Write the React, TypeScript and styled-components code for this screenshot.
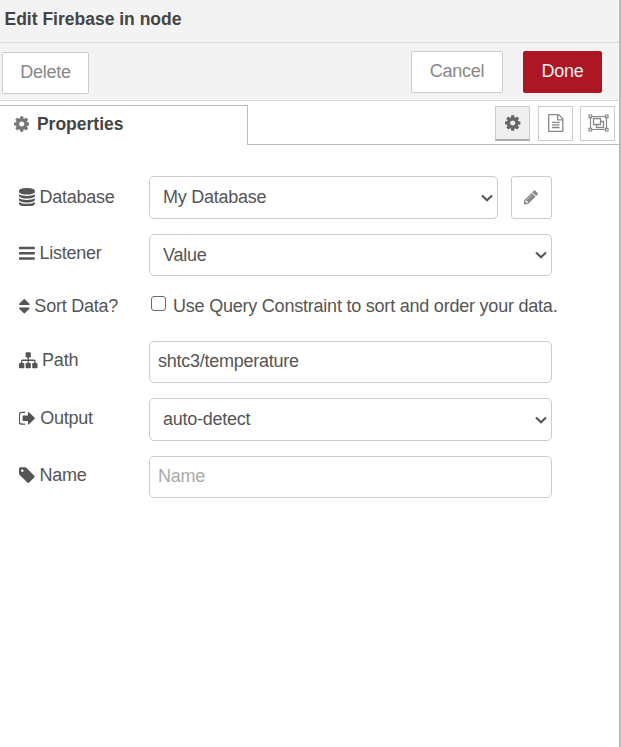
import React from "react";
import styled, { createGlobalStyle, css } from "styled-components";

const GlobalStyle = createGlobalStyle`
  * { box-sizing: border-box; }
  body { margin: 0; background: #fff; }
  body, input, select, button {
    font-family: "Liberation Sans", Arial, Helvetica, sans-serif;
    font-size: 18px;
    color: #555;
  }
`;

const Tray = styled.div`
  width: 621px;
  height: 747px;
  border-right: 2px solid #bbb;
  overflow: hidden;
`;

const Header = styled.header`
  height: 43px;
  padding: 0 4.5px;
  border-bottom: 1px solid #dadada;
  background: #f3f3f3;
  color: #444;
  font-size: 17.5px;
  font-weight: bold;
  line-height: 38px;
`;

const Toolbar = styled.div`
  display: flex;
  align-items: flex-start;
  height: 58px;
  padding: 8px 17px 0 2px;
  border-bottom: 1px solid #dadada;
  background: #f3f3f3;
`;

const ToolButton = styled.button<{ $width: number; $primary?: boolean; $low?: boolean }>`
  width: ${(p) => p.$width}px;
  height: 42px;
  margin-top: ${(p) => (p.$low ? 1 : 0)}px;
  padding: 0 0 2px;
  border: 1px solid ${(p) => (p.$primary ? "#ad1625" : "#ccc")};
  border-radius: 2px;
  background: ${(p) => (p.$primary ? "#ad1625" : "#fff")};
  color: ${(p) => (p.$primary ? "#eee" : "#888")};
  letter-spacing: -0.25px;
`;

const Actions = styled.div`
  display: flex;
  gap: 20px;
  margin-left: auto;
`;

const TabBar = styled.nav`
  display: flex;
  justify-content: space-between;
  height: 44px;
  padding-top: 4px;
  background: linear-gradient(#bbb, #bbb) bottom / 100% 1px no-repeat;
`;

const Tab = styled.div`
  display: flex;
  align-items: center;
  width: 248px;
  height: 40px;
  padding: 0 0 3px 14px;
  border: 1px solid #bbb;
  border-width: 1px 1px 0 0;
  background: #fff;
  color: #444;
  font-size: 17.5px;
  font-weight: bold;
  gap: 7.5px;
  svg { color: #777; }
`;

const TabTools = styled.div`
  display: flex;
  padding: 1px 4px 0 0;
`;

const IconTab = styled.button<{ $active?: boolean; $gap?: number }>`
  display: flex;
  align-items: center;
  justify-content: center;
  width: 35px;
  height: 35px;
  margin-left: ${(p) => p.$gap ?? 0}px;
  padding: 0 0 1px 1px;
  border: 1px solid #ccc;
  background: #fff;
  color: #888;
  ${(p) =>
    p.$active &&
    css`
      border-bottom: 2px solid #aaa;
      background: #efefef;
      color: #666;
    `}
`;

const Form = styled.form`
  display: grid;
  grid-template-columns: 130px 1fr;
  grid-template-rows: 58px 57px 50px 57px 58px 57px;
  padding: 31px 0 0 19px;
`;

const Label = styled.label<{ $top: number; $gap?: number }>`
  display: flex;
  align-items: center;
  align-self: start;
  gap: ${(p) => p.$gap ?? 4.6}px;
  height: 22px;
  margin-top: ${(p) => p.$top}px;
  letter-spacing: -0.24px;
  white-space: nowrap;
`;

const FieldCell = styled.div`
  display: flex;
  align-items: flex-start;
  gap: 13px;
`;

const fieldBox = css<{ $width?: number; $height?: number }>`
  display: block;
  width: ${(p) => p.$width ?? 403}px;
  height: ${(p) => p.$height ?? 42}px;
  margin: 0;
  border: 1px solid #ccc;
  border-radius: 5px;
  background: #fff;
  color: #555;
  outline: none;
  letter-spacing: -0.25px;
`;

const TextInput = styled.input<{ $width?: number; $height?: number }>`
  ${fieldBox}
  padding: 0 8px 1px;
  &::placeholder { color: #aaa; }
`;

const SelectWrap = styled.div`
  display: grid;
  > * { grid-area: 1 / 1; }
  > svg {
    align-self: center;
    justify-self: end;
    margin-right: 5px;
    pointer-events: none;
  }
`;

const SelectBox = styled.select<{ $width?: number; $height?: number }>`
  ${fieldBox}
  appearance: none;
  padding: 0 24px 1px 13px;
`;

const EditButton = styled.button`
  display: flex;
  align-items: center;
  justify-content: center;
  width: 41px;
  height: 43px;
  padding: 0 1px 1px 0;
  border: 1px solid #ccc;
  border-radius: 3px;
  background: #fff;
  color: #888;
`;

const CheckLabel = styled.label`
  display: flex;
  align-items: flex-start;
  gap: 7px;
  padding-left: 2px;
  line-height: 22px;
  letter-spacing: -0.22px;
  white-space: nowrap;
  margin-top: 4px;
`;

const CheckBox = styled.input`
  appearance: none;
  width: 15px;
  height: 15px;
  margin: 1px 0 0;
  border: 1px solid #6b6b6b;
  border-radius: 3px;
  background: #fff;
`;

const ICONS = {
  cog: { x: 128, w: 1536, d: "M1152 896q0-106-75-181t-181-75-181 75-75 181 75 181 181 75 181-75 75-181zm512-109v222q0 12-8 23t-20 13l-185 28q-19 54-39 91 35 50 107 138 10 12 10 25t-9 23q-27 37-99 108t-94 71q-12 0-26-9l-138-108q-44 23-91 38-16 136-29 186-7 28-36 28h-222q-14 0-24.5-8.5t-11.5-21.5l-28-184q-49-16-90-37l-141 107q-10 9-25 9-14 0-25-11-126-114-165-168-7-10-7-23 0-12 8-23 15-21 51-66.5t54-70.5q-27-50-41-99l-183-27q-13-2-21-12.5t-8-23.5v-222q0-12 8-23t19-13l186-28q14-46 39-92-40-57-107-138-10-12-10-24 0-10 9-23 26-36 98.5-107.5t94.5-71.5q13 0 26 10l138 107q44-23 91-38 16-136 29-186 7-28 36-28h222q14 0 24.5 8.5t11.5 21.5l28 184q49 16 90 37l142-107q9-9 24-9 13 0 25 10 129 119 165 170 7 8 7 22 0 12-8 23-15 21-51 66.5t-54 70.5q26 50 41 98l183 28q13 2 21 12.5t8 23.5z" },
  database: { x: 128, w: 1536, d: "M896 768q237 0 443-43t325-127v170q0 69-103 128t-280 93.5-385 34.5-385-34.5-280-93.5-103-128v-170q119 84 325 127t443 43zm0 768q237 0 443-43t325-127v170q0 69-103 128t-280 93.5-385 34.5-385-34.5-280-93.5-103-128v-170q119 84 325 127t443 43zm0-384q237 0 443-43t325-127v170q0 69-103 128t-280 93.5-385 34.5-385-34.5-280-93.5-103-128v-170q119 84 325 127t443 43zm0-1152q208 0 385 34.5t280 93.5 103 128v128q0 69-103 128t-280 93.5-385 34.5-385-34.5-280-93.5-103-128v-128q0-69 103-128t280-93.5 385-34.5z" },
  bars: { x: 128, w: 1536, d: "M192 256h1408q64 0 64 64v128q0 64-64 64h-1408q-64 0-64-64v-128q0-64 64-64zm0 512h1408q64 0 64 64v128q0 64-64 64h-1408q-64 0-64-64v-128q0-64 64-64zm0 512h1408q64 0 64 64v128q0 64-64 64h-1408q-64 0-64-64v-128q0-64 64-64z" },
  sort: { x: 384, w: 1024, d: "M1408 1088q0 26-19 45l-448 448q-19 19-45 19t-45-19l-448-448q-19-19-19-45t19-45 45-19h896q26 0 45 19t19 45zm0-384q0 26-19 45t-45 19h-896q-26 0-45-19t-19-45 19-45l448-448q19-19 45-19t45 19l448 448q19 19 19 45z" },
  sitemap: { x: 0, w: 1792, d: "M1792 1248v320q0 40-28 68t-68 28h-320q-40 0-68-28t-28-68v-320q0-40 28-68t68-28h96v-192h-512v192h96q40 0 68 28t28 68v320q0 40-28 68t-68 28h-320q-40 0-68-28t-28-68v-320q0-40 28-68t68-28h96v-192h-512v192h96q40 0 68 28t28 68v320q0 40-28 68t-68 28h-320q-40 0-68-28t-28-68v-320q0-40 28-68t68-28h96v-192q0-52 38-90t90-38h512v-192h-96q-40 0-68-28t-28-68v-320q0-40 28-68t68-28h320q40 0 68 28t28 68v320q0 40-28 68t-68 28h-96v192h512q52 0 90 38t38 90v192h96q40 0 68 28t28 68z" },
  signOut: { x: 96, w: 1568, d: "M704 1440q0 4 1 20t.5 26.5-3 23.5-10 19.5-20.5 6.5h-320q-119 0-203.5-84.5t-84.5-203.5v-704q0-119 84.5-203.5t203.5-84.5h320q13 0 22.5 9.5t9.5 22.5q0 4 1 20t.5 26.5-3 23.5-10 19.5-20.5 6.5h-320q-66 0-113 47t-47 113v704q0 66 47 113t113 47h312l11.5 1 11.5 3 8 5.5 7 9 2 13.5zm928-544q0 26-19 45l-544 544q-19 19-45 19t-45-19-19-45v-288h-448q-26 0-45-19t-19-45v-384q0-26 19-45t45-19h448v-288q0-26 19-45t45-19 45 19l544 544q19 19 19 45z" },
  tag: { x: 128, w: 1536, d: "M576 448q0-53-37.5-90.5t-90.5-37.5-90.5 37.5-37.5 90.5 37.5 90.5 90.5 37.5 90.5-37.5 37.5-90.5zm1067 576q0 53-37 90l-491 492q-39 37-91 37-53 0-90-37l-715-716q-38-37-64.5-101t-26.5-117v-416q0-52 38-90t90-38h416q53 0 117 26.5t102 64.5l715 714q37 39 37 91z" },
  pencil: { x: 128, w: 1536, d: "M491 1536l91-91-235-235-91 91v107h128v128h107zm523-928q0-22-22-22-10 0-17 7l-542 542q-7 7-7 17 0 22 22 22 10 0 17-7l542-542q7-7 7-17zm-54-192l416 416-832 832h-416v-416zm683 96q0 53-37 90l-166 166-416-416 166-165q36-38 90-38 53 0 91 38l235 234q37 39 37 91z" },
  fileText: { x: 128, w: 1536, d: "M1596 380q28 28 48 76t20 88v1152q0 40-28 68t-68 28h-1344q-40 0-68-28t-28-68v-1600q0-40 28-68t68-28h896q40 0 88 20t76 48zm-444-244v376h376q-10-29-22-41l-313-313q-12-12-41-22zm384 1528v-1024h-416q-40 0-68-28t-28-68v-416h-768v1536h1280zm-1024-864q0-32 32-32h704q32 0 32 32v64q0 32-32 32h-704q-32 0-32-32v-64zm32 224h704q32 0 32 32v64q0 32-32 32h-704q-32 0-32-32v-64q0-32 32-32zm0 256h704q32 0 32 32v64q0 32-32 32h-704q-32 0-32-32v-64q0-32 32-32z" },
};

function Icon({ name, size = 18 }: { name: keyof typeof ICONS; size?: number }) {
  const { x, w, d } = ICONS[name];
  return (
    <svg width={(w / 1792) * size} height={size} viewBox={`${x} 0 ${w} 1792`} fill="currentColor" aria-hidden="true">
      <path d={d} />
    </svg>
  );
}

function ObjectGroupIcon() {
  return (
    <svg width="21" height="18" viewBox="0 0 21 18" fill="none" stroke="currentColor" strokeWidth="1.2" aria-hidden="true">
      <path d="M3 2.5h15M3 15.5h15M2.5 3v12M18.5 3v12" />
      <path fill="#fff" d="M1 1h2.6v2.6H1zM17.4 1H20v2.6h-2.6zM1 14.4h2.6V17H1zM17.4 14.4H20V17h-2.6z" />
      <path d="M5.5 4.5h7v6h-7zM12.5 7.5h3v6h-7v-3" strokeWidth="1.3" />
    </svg>
  );
}

function Select({ value, width, height }: { value: string; width?: number; height?: number }) {
  return (
    <SelectWrap>
      <SelectBox $width={width} $height={height} defaultValue={value}>
        <option>{value}</option>
      </SelectBox>
      <svg width="12" height="8" viewBox="0 0 12 8" fill="none" stroke="#555" strokeWidth="2.1" aria-hidden="true">
        <path d="M1 1.4l5 4.8 5-4.8" />
      </svg>
    </SelectWrap>
  );
}

export default function App() {
  return (
    <>
      <GlobalStyle />
      <Tray>
        <Header>Edit Firebase in node</Header>
        <Toolbar>
          <ToolButton $width={87} $low>Delete</ToolButton>
          <Actions>
            <ToolButton $width={92}>Cancel</ToolButton>
            <ToolButton $width={79} $primary>Done</ToolButton>
          </Actions>
        </Toolbar>
        <TabBar>
          <Tab><Icon name="cog" /> Properties</Tab>
          <TabTools>
            <IconTab $active aria-label="Properties"><Icon name="cog" /></IconTab>
            <IconTab $gap={8} aria-label="Description"><Icon name="fileText" /></IconTab>
            <IconTab $gap={7} aria-label="Appearance"><ObjectGroupIcon /></IconTab>
          </TabTools>
        </TabBar>
        <Form>
          <Label $top={10}><Icon name="database" size={18.5} /> Database</Label>
          <FieldCell>
            <Select value="My Database" width={349} height={43} />
            <EditButton type="button" aria-label="Edit database"><Icon name="pencil" size={16.5} /></EditButton>
          </FieldCell>

          <Label $top={8}><Icon name="bars" size={18.5} /> Listener</Label>
          <FieldCell><Select value="Value" /></FieldCell>

          <Label $top={4} $gap={4.8}><Icon name="sort" size={18.5} /> Sort Data?</Label>
          <FieldCell>
            <CheckLabel><CheckBox type="checkbox" /> Use Query Constraint to sort and order your data.</CheckLabel>
          </FieldCell>

          <Label $top={8}><Icon name="sitemap" size={18.5} /> Path</Label>
          <FieldCell><TextInput defaultValue="shtc3/temperature" /></FieldCell>

          <Label $top={9} $gap={5}><Icon name="signOut" size={18.5} /> Output</Label>
          <FieldCell><Select value="auto-detect" height={43} /></FieldCell>

          <Label $top={8}><Icon name="tag" size={18.5} /> Name</Label>
          <FieldCell><TextInput placeholder="Name" /></FieldCell>
        </Form>
      </Tray>
    </>
  );
}
